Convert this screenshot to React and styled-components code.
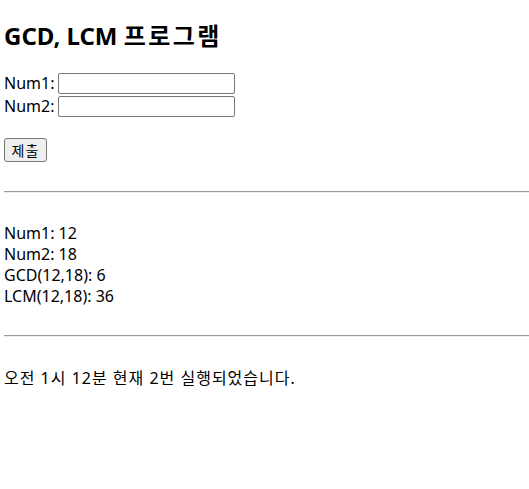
import styled, { createGlobalStyle } from 'styled-components'

const Global = createGlobalStyle`
    body {
        margin: 0;
        background: #ffffff;
        color: #000000;
        font-family: "Noto Sans", "Noto Sans CJK KR", sans-serif;
        font-size: 16px;
        line-height: 21px;
    }
`

const Page = styled.div`
    padding: 20px 0 0 4px;
`

const Title = styled.h2`
    margin: 0 0 20px;
    font-size: 24px;
    line-height: 32px;
    font-weight: bold;
    font-family: "Noto Sans", "Noto Sans CJK KR", sans-serif;
`

const Hangul = styled.span`
    letter-spacing: ${p => p.$spacing}px;
`

const Form = styled.form`
    display: flex;
    flex-direction: column;
    align-items: flex-start;
`

const Row = styled.label`
    display: flex;
    align-items: center;
    height: 23px;
    gap: 4px;
`

const Input = styled.input`
    width: 177px;
    height: 21px;
    box-sizing: border-box;
    border: 1px solid #767676;
    border-radius: 2px;
    padding: 1px 2px;
    margin: 0;
    font-size: 13px;
`

const Button = styled.button`
    margin-top: 20px;
    height: 24px;
    width: 43px;
    padding: 0;
    background: #efefef;
    border: 1px solid #767676;
    border-radius: 3px;
    font-family: "Noto Sans CJK KR", sans-serif;
    font-size: 14px;
    letter-spacing: 1px;
    color: #000000;
`

const Rule = styled.hr`
    margin: ${p => p.$top}px 0 0;
    height: 0;
    border: none;
    border-top: 1px solid #9a9a9a;
    border-bottom: 1px solid #eeeeee;
`

const Result = styled.div`
    margin-top: ${p => p.$top}px;
    display: flex;
    flex-direction: column;
`

const App = () => {
    return (
        <Page>
            <Global />
            <Title>GCD, LCM <Hangul $spacing={2.4}>프로그램</Hangul></Title>
            <Form onSubmit={e => e.preventDefault()}>
                <Row>Num1:<Input type="text" /></Row>
                <Row>Num2:<Input type="text" /></Row>
                <Button type="submit">제출</Button>
            </Form>
            <Rule $top={29} />
            <Result $top={30}>
                <span>Num1: 12</span>
                <span>Num2: 18</span>
                <span>GCD(12,18): 6</span>
                <span>LCM(12,18): 36</span>
            </Result>
            <Rule $top={28} />
            <Result $top={31}>
                <Hangul $spacing={1}>오전 1시 12분 현재 2번 실행되었습니다.</Hangul>
            </Result>
        </Page>
    )
}

export default App
